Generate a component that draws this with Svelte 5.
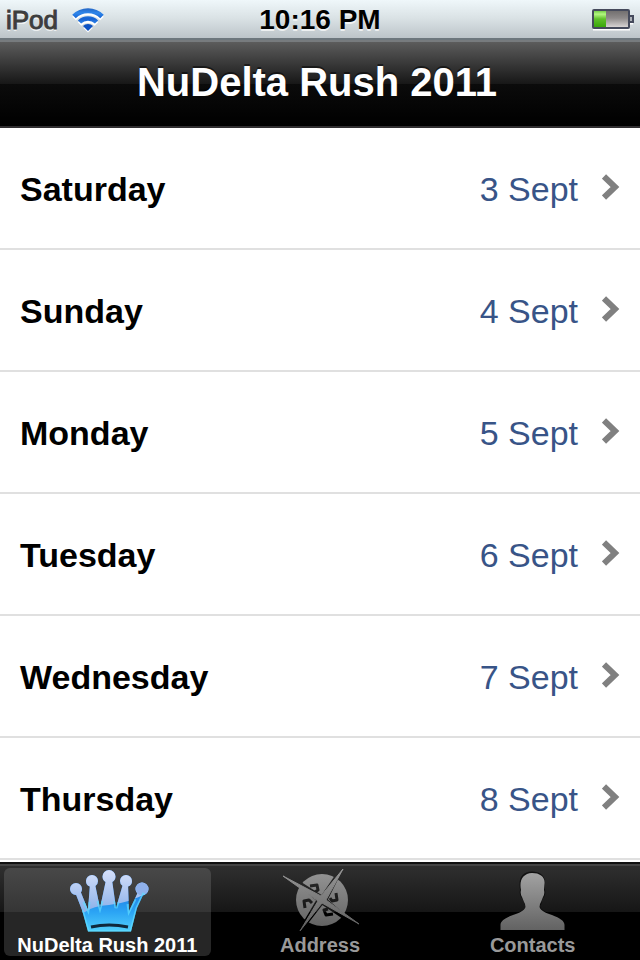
<script>
  const days = [
    { day: 'Saturday', date: '3 Sept' },
    { day: 'Sunday', date: '4 Sept' },
    { day: 'Monday', date: '5 Sept' },
    { day: 'Tuesday', date: '6 Sept' },
    { day: 'Wednesday', date: '7 Sept' },
    { day: 'Thursday', date: '8 Sept' }
  ];
  const tabs = [
    { id: 'rush', label: 'NuDelta Rush 2011' },
    { id: 'address', label: 'Address' },
    { id: 'contacts', label: 'Contacts' }
  ];
  let active = $state('rush');
</script>

<div class="screen">
  <div class="status">
    <div class="carrier">
      <span>iPod</span>
      <svg width="32" height="26" viewBox="0 0 32 26" aria-hidden="true">
        <defs>
          <linearGradient id="wifi" x1="0" y1="0" x2="0" y2="24" gradientUnits="userSpaceOnUse">
            <stop offset="0" stop-color="#1f5cba" />
            <stop offset=".25" stop-color="#2f86ea" />
            <stop offset=".5" stop-color="#1560d0" />
            <stop offset=".65" stop-color="#2b7fe6" />
            <stop offset="1" stop-color="#0a4bb8" />
          </linearGradient>
        </defs>
        <g transform="translate(0 2)" fill="none" stroke="#fff" stroke-width="5">
          <path d="M2 9.500A19.800 19.800 0 0 1 30 9.500M7.500 15A12 12 0 0 1 24.500 15" />
          <path d="M16 23.500L11.400 18.900A6.500 6.500 0 0 1 20.600 18.900Z" fill="#fff" stroke="none" />
        </g>
        <g fill="none" stroke="url(#wifi)" stroke-width="5">
          <path d="M2 9.500A19.800 19.800 0 0 1 30 9.500" />
          <path d="M7.500 15A12 12 0 0 1 24.500 15" stroke-width="4.500" />
          <path d="M16 24L11 19A7 7 0 0 1 21 19Z" fill="#0c52c4" stroke="none" />
        </g>
      </svg>
    </div>
    <time>10:16 PM</time>
    <svg class="battery" width="42" height="22" viewBox="0 0 42 22" aria-hidden="true">
      <defs>
        <linearGradient id="cell" x1="0" y1="0" x2="0" y2="1">
          <stop offset="0" stop-color="#6f6c6c" />
          <stop offset=".45" stop-color="#8e8a8a" />
          <stop offset="1" stop-color="#e0dcdc" />
        </linearGradient>
        <linearGradient id="charge" x1="0" y1="0" x2="0" y2="1">
          <stop offset="0" stop-color="#76cf49" />
          <stop offset=".2" stop-color="#b4f781" />
          <stop offset=".5" stop-color="#5fc02a" />
          <stop offset="1" stop-color="#39a60a" />
        </linearGradient>
      </defs>
      <path d="M1 20.500h37M38 14.500h3" stroke="#fff" stroke-width="2" />
      <rect x="1" y="1" width="36" height="18" rx="1" fill="url(#cell)" stroke="#454a5c" stroke-width="2" />
      <rect x="2" y="2" width="12" height="16" fill="url(#charge)" />
      <path d="M38 7h3v6h-3" fill="#aeb2b8" stroke="#454a5c" stroke-width="2" />
    </svg>
  </div>

  <header><h1>NuDelta Rush 2011</h1></header>

  <main>
    <ul>
      {#each days as item}
        <li>
          <a href="#{item.day.toLowerCase()}">
            <span class="day">{item.day}</span>
            <span class="date">{item.date}</span>
            <svg class="chevron" width="20" height="26" viewBox="0 0 20 26" aria-hidden="true">
              <path d="M2 2.500L13 13L2 23.500" fill="none" stroke="#808080" stroke-width="6" />
            </svg>
          </a>
        </li>
      {/each}
    </ul>
  </main>

  <nav>
    {#each tabs as tab}
      <button type="button" class:active={active === tab.id} onclick={() => (active = tab.id)}>
        {#if tab.id === 'rush'}
          <svg width="84" height="66" viewBox="0 0 84 66" aria-hidden="true">
            <defs>
              <linearGradient id="crown" x1="0" y1="24" x2="0" y2="64" gradientUnits="userSpaceOnUse">
                <stop offset="0" stop-color="#1f7ce2" />
                <stop offset=".5" stop-color="#2ba4f4" />
                <stop offset="1" stop-color="#52d0fc" />
              </linearGradient>
              <linearGradient id="gloss" x1="0" y1="2" x2="0" y2="42" gradientUnits="userSpaceOnUse">
                <stop offset="0" stop-color="#d6e0fa" />
                <stop offset="1" stop-color="#8db2ea" />
              </linearGradient>
              <clipPath id="crown-shape">
                <circle cx="11" cy="21" r="6" />
                <circle cx="27" cy="13" r="6" />
                <circle cx="44" cy="8.500" r="6.500" />
                <circle cx="61" cy="13" r="6" />
                <circle cx="77" cy="21" r="6.500" />
                <path d="M10 24L15 22L23 42L25 16H30L35 40L41 12H47L51 40L58 16H63L64 43L74 22L79 25L72 40L66 63.500H23L17 42Z" />
              </clipPath>
            </defs>
            <g clip-path="url(#crown-shape)">
              <rect width="84" height="66" fill="url(#crown)" />
              <path d="M0 0H84V24Q64 35 44 37Q28 38 20 44L0 50Z" fill="url(#gloss)" />
              <circle cx="77" cy="21" r="6.500" fill="#8fb0ea" />
              <path d="M17 42L23 63.500H66L72 40L79 25M19 34L23 42L24 34M33 33L35 40L37 33M50 33L51 40L53 34M63 36L64 43L70 31" fill="none" stroke="#60dcff" stroke-width="3" opacity=".7" />
            </g>
            <path d="M26 59Q44 55 63 59" fill="none" stroke="#10283c" stroke-width="3" />
          </svg>
        {:else if tab.id === 'address'}
          <svg width="84" height="66" viewBox="0 0 84 66" aria-hidden="true">
            <defs>
              <linearGradient id="compass" x1="0" y1="0" x2="0" y2="66" gradientUnits="userSpaceOnUse">
                <stop offset="0" stop-color="#989898" />
                <stop offset="1" stop-color="#5c5c5c" />
              </linearGradient>
              <mask id="needles">
                <rect width="84" height="66" fill="#fff" />
                <path d="M14 10L44 29L65 -2L48 32L78 58L44 35L20 66L40 32Z" fill="#000" stroke="#000" stroke-width="3" />
                <g fill="none" stroke="#000" stroke-width="3" stroke-linejoin="round">
                  <path d="M32 18L39 17L40 22L37 24" />
                  <path d="M58 25L59 32L54 33L52 30" />
                  <path d="M55 46L48 47L46 42L50 41" />
                  <path d="M27 40L26 33L31 32L34 35" />
                </g>
              </mask>
            </defs>
            <g fill="url(#compass)">
              <circle cx="44" cy="32" r="26" mask="url(#needles)" />
              <path d="M5 8L43 28L65 1L48 32L81 56L44 35L22 63L40 33Z" stroke="url(#compass)" stroke-width="1" />
            </g>
          </svg>
        {:else}
          <svg width="84" height="66" viewBox="0 0 84 66" aria-hidden="true">
            <defs>
              <linearGradient id="person" x1="0" y1="0" x2="0" y2="66" gradientUnits="userSpaceOnUse">
                <stop offset="0" stop-color="#a8a8a8" />
                <stop offset="1" stop-color="#5e5e5e" />
              </linearGradient>
            </defs>
            <path d="M41 3.500C49 3.500 55 8 54 16L54 22Q55 26 53 29L51 32Q51 36 49 38C50 42 55 44 61 46C70 49 74 52 74 61H9C9 52 13 49 22 46C28 44 34 42 35 38Q33 36 32 32L30 29Q28 26 29 22C27 10 31 4 41 3.500Z" fill="#000" opacity=".6" />
            <path d="M41 5C49 5 54.500 9 53.500 16L53 22Q54 26 52 29L50 34Q48.500 36 48.500 39C50 43 55 45 61 47C69 50 73.500 53 73.500 57V62H9.500V57C9.500 53 14 50 22 47C28 45 33 43 34.500 39Q34.500 36 33 34L31 29Q29 26 30 22C28 12 32 5.500 41 5Z" fill="url(#person)" />
          </svg>
        {/if}
        <span>{tab.label}</span>
      </button>
    {/each}
  </nav>
</div>

<style>
  :global(body) {
    background: #fff;
  }
  .screen {
    display: flex;
    flex-direction: column;
    min-height: 100vh;
    font-family: 'Liberation Sans', Arial, Helvetica, sans-serif;
  }
  .status {
    display: grid;
    grid-template-columns: 1fr auto 1fr;
    align-items: center;
    box-sizing: border-box;
    height: 40px;
    padding: 2px 6px 0;
    background: linear-gradient(#eff7fa, #d9e1e4 50%, #bcc4c9);
    border-bottom: 2px solid #6d777d;
    text-shadow: 0 2px 0 rgba(255, 255, 255, 0.7);
  }
  .carrier {
    display: flex;
    align-items: center;
    gap: 14px;
    font-size: 26px;
    line-height: 28px;
    color: #3d3d3d;
    -webkit-text-stroke: 1px #3d3d3d;
  }
  time {
    font-size: 28px;
    font-weight: bold;
    color: #000;
  }
  .battery {
    justify-self: end;
  }
  header {
    display: flex;
    align-items: center;
    justify-content: center;
    box-sizing: border-box;
    height: 88px;
    padding: 0 6px 4px 0;
    background: linear-gradient(#5c5c5c, #171717 50%, #0b0b0b 50%, #000);
    border-top: 2px solid #777b7e;
    border-bottom: 2px solid #302e30;
  }
  h1 {
    margin: 0;
    font-size: 40px;
    line-height: 48px;
    color: #fff;
    text-shadow: 0 -2px 0 rgba(0, 0, 0, 0.5);
  }
  main {
    flex: 1;
  }
  ul {
    margin: 0;
    padding: 0;
    list-style: none;
  }
  a {
    display: flex;
    align-items: center;
    box-sizing: border-box;
    height: 122px;
    padding: 2px 18px 0 20px;
    border-bottom: 2px solid #e0e0e0;
    font-size: 34px;
    line-height: 40px;
    color: #000;
    text-decoration: none;
  }
  .day {
    flex: 1;
    font-weight: bold;
  }
  .date {
    margin-right: 24px;
    color: #385487;
  }
  .chevron {
    margin-bottom: 4px;
  }
  nav {
    display: grid;
    grid-template-columns: repeat(3, 1fr);
    gap: 6px;
    box-sizing: border-box;
    height: 98px;
    padding: 2px 4px 4px;
    background: linear-gradient(#303030, #161616 50%, #000 50%);
    border-top: 2px solid #111;
    box-shadow: inset 0 2px 0 #444;
  }
  button {
    display: flex;
    flex-direction: column;
    align-items: center;
    margin-top: 2px;
    padding: 0;
    border: 0;
    border-radius: 6px;
    background: none;
    font-family: inherit;
    font-size: 20px;
    font-weight: bold;
    line-height: 22px;
    color: #999;
  }
  button.active {
    background: linear-gradient(#484848, #353535 50%, #262626 50%);
    color: #fff;
  }
</style>
